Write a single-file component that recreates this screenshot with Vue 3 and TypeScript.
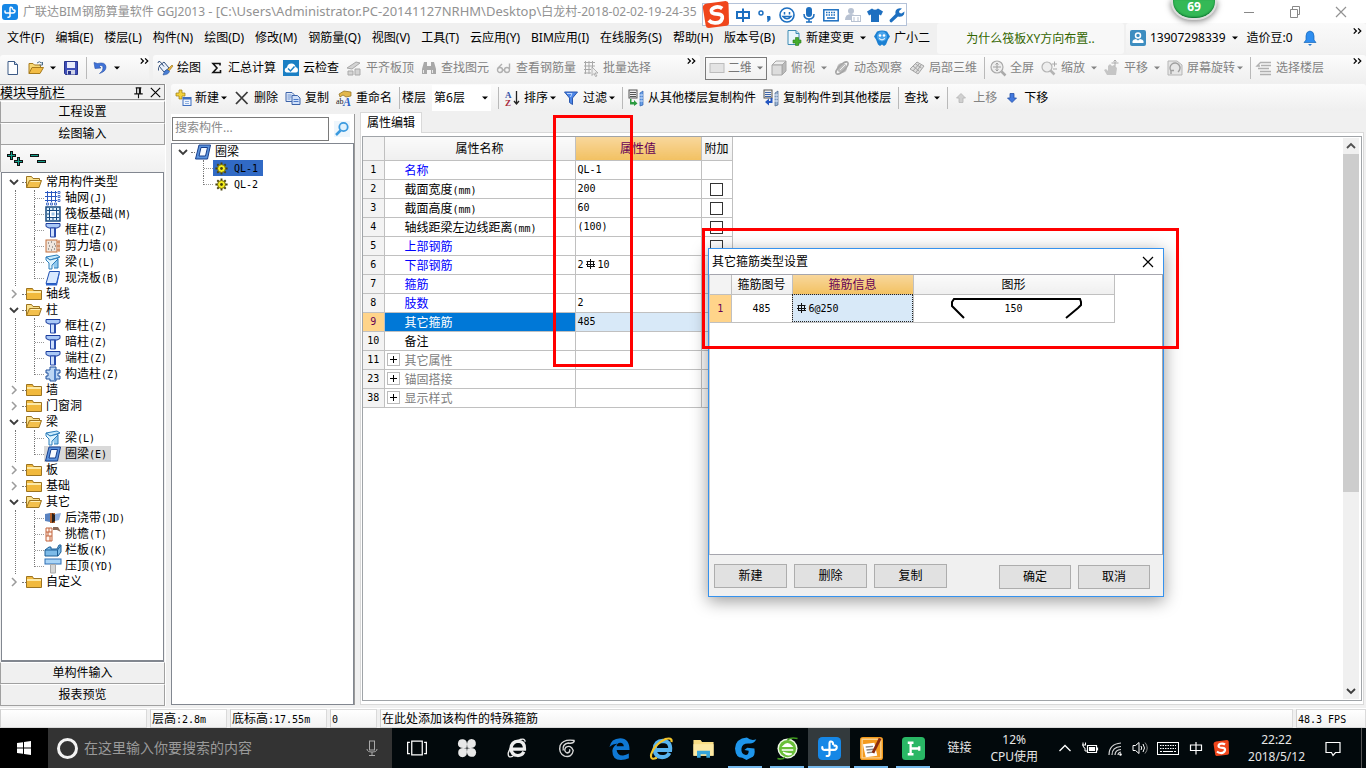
<script setup lang="ts">
import { h, ref, type FunctionalComponent } from 'vue'

interface Tool { i?: string; t?: string; arrow?: 'near' | 'far'; off?: boolean; sep?: boolean }
interface Row { n: number; t: string; v?: string; kind?: 'key' | 'group'; box?: boolean }
interface Group { t: string; open?: boolean; kids?: { i: string; t: string; on?: boolean }[] }

const glodon = '<rect width="16" height="16" rx="3" fill="#1687e6"/><path d="M10.500 5Q10.500 2.800 8.500 3.200 8 3.500 8 4.500v7.500q0 1.300-2 1.200M3 7q-.3 2.200 2 2h6q2.300-.2 2-2.300-.3-1-1.500-.7" fill="none" stroke="#fff" stroke-width="1.500" stroke-linecap="round"/>'
const art: Record<string, string> = {
  glodon,
  doc: '<path d="M3 1.500h6.500l3 3v10h-9.500z" fill="#fdfeff" stroke="#3c5a86"/><path d="M9.500 1.500v3h3" fill="#c9d8ee" stroke="#3c5a86"/>',
  open: '<path d="M1 13.500v-10h4l1.500 1.500h6v3" fill="#f7d774" stroke="#a87b1c"/><path d="M1 13.500l3-6h11.500l-3.500 6z" fill="#f2bc45" stroke="#a87b1c"/><path d="M9 3q2.500-2.500 4.500 0l1-1v3h-3" fill="none" stroke="#4e6e8a"/>',
  save: '<path d="M1.500 1.500h13v13h-12l-1-1z" fill="#3f4fb8" stroke="#27338b"/><rect x="4" y="2" width="8" height="6" fill="#e9ecfb"/><rect x="4" y="10" width="8" height="4.500" fill="#cfd4e8"/><rect x="5" y="11" width="3" height="3.500" fill="#27338b"/>',
  undo: '<path d="M2 2.500l1 6 6-.5-2-2q4-1.500 4 2 0 3-3.500 5.500 6.500-2 6.500-6.500-.5-5.500-8.500-3.500z" fill="#3f72d8" stroke="#2750a8" stroke-width=".6"/>',
  paint: '<path d="M2 6l5-4 5 6-5 4z" fill="#e9f0fb" stroke="#33507c"/><path d="M1 3q0-2 2-1.500l4 5" fill="none" stroke="#33507c"/><path d="M2 6q-2 4 0 5z" fill="#33507c"/><path d="M15 5l1 1-4 5-2-1z" fill="#e8b33a" stroke="#946d15" stroke-width=".6"/><path d="M6 15q2-6 5-5l1.500 1.500q-1 3-6.500 3.500z" fill="#4a7fd4" stroke="#28549c" stroke-width=".6"/>',
  sigma: '<path d="M12 5.500V3.500H5l4 4.500-4 4.500h7.500v-2.500" fill="none" stroke="#111" stroke-width="1.600"/>',
  cloud: '<rect width="16" height="16" fill="#1a7fc4"/><path d="M3.500 12.500q-2.500-1-1.500-3.500.5-1.500 2-1.500.5-4 4.500-4 3.500 0 4 3.500 2.500.5 2.500 3 0 2.500-2 2.500z" fill="#fff"/><path d="M5 8.500l2.500 2.500 4-4.500" fill="none" stroke="#1a7fc4" stroke-width="1.500"/>',
  align: '<g fill="#d4d4d4" stroke="#a9a9a9"><path d="M1 8l9-6 4 1-8 6z"/><path d="M2 11h5v4H2zM9 9h5v6H9z"/></g>',
  bino: '<g fill="#a8a8a8"><path d="M3 2h3v4h4V2h3l2 7v5h-5v-4H6v4H1V9z"/></g><path d="M2.500 10v3M11.500 10v3" stroke="#e8e8e8"/>',
  glass: '<g fill="none" stroke="#b0b0b0" stroke-width="1.400"><circle cx="4" cy="10" r="2.500"/><circle cx="11" cy="10" r="2.500"/><path d="M6.500 10h2M2 8L6 4M13.500 9V3.500"/></g>',
  batch: '<path d="M1 2.500h11M1 6h11M1 9.500h7M1 13h7M2.500 1v13M6 1v13M9.500 1v7" stroke="#a9a9a9" fill="none"/><path d="M9 7l6 6h-3l2 3-1.500.5-1.500-3-2 2z" fill="#eee" stroke="#999" stroke-width=".7"/>',
  view2: '<rect x="1" y="3.500" width="14" height="9" fill="#e3e3e3" stroke="#bcbcbc"/>',
  cube: '<path d="M1 5l4-4h10l-4 4z" fill="#eee" stroke="#a8a8a8"/><path d="M11 5l4-4v10l-4 4z" fill="#bbb" stroke="#a8a8a8"/><path d="M1 5h10v10H1z" fill="#ddd" stroke="#a8a8a8"/>',
  orbit: '<circle cx="8" cy="8" r="5" fill="#bcbcbc"/><ellipse cx="8" cy="8" rx="8" ry="3" transform="rotate(-45 8 8)" fill="none" stroke="#a5a5a5" stroke-width="1.500"/><path d="M6 10l5-5" stroke="#f0f0f0"/>',
  local: '<path d="M1 9l7-7 7 4-6 8z" fill="#dedede" stroke="#a4a4a4"/><path d="M4 6l6 5M6.500 4l6 4M4 11l6-7M7 12.500l5-7.500" stroke="#a4a4a4" fill="none"/>',
  full: '<circle cx="7" cy="7" r="6" fill="#eee" stroke="#aaa" stroke-width="1.200"/><path d="M11.500 11.500l4 4" stroke="#aaa" stroke-width="2.500"/><path d="M3 7h8M7 3v8M5.500 4.500L7 3l1.500 1.500M5.500 9.500L7 11l1.500-1.500" stroke="#a0a0a0" fill="none"/>',
  zoom: '<circle cx="6" cy="7" r="5" fill="#eee" stroke="#b4b4b4" stroke-width="1.200"/><path d="M9.500 10.500l4 4" stroke="#b4b4b4" stroke-width="2.500"/><path d="M11 4h5M13.500 1.500v5M12 9h4" stroke="#aaa"/>',
  pan: '<path d="M3 15l-3-5 2-1 2 2V6l2-2 2 2 2-1 3 3-1 7z" fill="#c5c5c5"/><path d="M7.500 3h7M11 0v6.500" stroke="#aaa"/><path d="M9.500 1.500L11 0l1.500 1.500" fill="none" stroke="#aaa"/>',
  rot: '<path d="M1 1h9l5 4v10H1z" fill="#e6e6e6" stroke="#b5b5b5"/><path d="M4 11a5 5 0 1 1 7 1M4 14v-3.500h3" fill="none" stroke="#a0a0a0" stroke-width="1.400"/>',
  floors: '<path d="M5 2.500h10M5 5.500h10M2 8.500h11M4 11.500h11M4 14.500h11M5 2L1 6h3" fill="none" stroke="#b0b0b0" stroke-width="1.400"/>',
  add: '<path d="M4 0h3v3h3v3H7v3H4V6H1V3h3z" fill="#f3d23c" stroke="#9c7d10" stroke-width=".7"/><rect x="8" y="7.500" width="8" height="8" fill="#eef4fd" stroke="#3f6fc0"/><path d="M8 8.500h8" stroke="#3f6fc0" stroke-width="2"/><path d="M10 11.500h4M10 13.500h4" stroke="#8fb0e0"/>',
  del: '<path d="M2 2l11.500 12M13.500 2L2 14" stroke="#3a3a3a" stroke-width="1.800" fill="none"/>',
  copy: '<path d="M1 2.500h6l2 2v7H1z" fill="#dfe9fa" stroke="#3c63a8"/><path d="M2.500 5h4M2.500 7h4M2.500 9h3" stroke="#6d92cf"/><path d="M7 5.500h5.500L15 8v6.500H7z" fill="#cfe0fa" stroke="#3c63a8"/><path d="M8.500 9.500h5M8.500 11.500h5" stroke="#4c79c6"/>',
  rename: '<path d="M3 4l5-3 7 1v4l-5 1-3-2-3 2z" fill="#e2b74c" stroke="#8a681a" stroke-width=".7"/><text x="0" y="14" font-size="8" font-family="Liberation Serif" fill="#222">ab</text><text x="7" y="16" font-size="12" font-style="italic" font-weight="bold" font-family="Liberation Serif" fill="#2a5fc4">A</text>',
  sort: '<text x="1" y="8" font-size="9" font-weight="bold" font-family="Liberation Serif" fill="#3353a8">A</text><text x="1" y="16" font-size="9" font-weight="bold" font-family="Liberation Serif" fill="#a82a3c">Z</text><path d="M12.500 1v12M10 11l2.500 3 2.500-3" fill="none" stroke="#222" stroke-width="1.300"/>',
  funnel: '<path d="M1.500 2h13L9.500 8v6.500l-3-2V8z" fill="#4c86e8" stroke="#2a57ae"/><path d="M4 3.500h5L7.500 7" fill="none" stroke="#bcd6ff"/>',
  from: '<rect x="1" y="0" width="8" height="8" fill="#eee" stroke="#555"/><path d="M2 2.500h6M2 4.500h6M2 6.500h6" stroke="#555"/><path d="M12 3l3-2v14l-3 1z" fill="#6aa0e8" stroke="#2e62b0" stroke-width=".7"/><path d="M11 5h4M11 8h4M11 11h4" stroke="#d8e8ff"/><path d="M3.500 9v3H6v-2l3.500 3.500L6 16v-1.500H2V9z" fill="#2c9b41"/>',
  to: '<rect x="1" y="0" width="8" height="8" fill="#eee" stroke="#555"/><path d="M2 2.500h6M2 4.500h6M2 6.500h6" stroke="#3c63a8"/><path d="M12 3l3-2v14l-3 1z" fill="#9ab4d4" stroke="#46618a" stroke-width=".7"/><path d="M11 5h4M11 8h4M11 11h4" stroke="#e8f0ff"/><path d="M9.500 8v5H6v2.500L2 12l4-3.500V11h1.500V8z" fill="#2456c0"/>',
  up: '<path d="M8 3.500l4.500 4.500H10v4.500H6V8H3.500z" fill="#d0d0d0" stroke="#b5b5b5" stroke-width=".8"/>',
  down: '<path d="M8 12.500L3.500 8H6V3.500h4V8h2.500z" fill="#4278dd" stroke="#2450a8" stroke-width=".8"/>',
  change: '<path d="M2 .5h8l3 3v11H2z" fill="#eaf6fc" stroke="#3f8cb4"/><path d="M10 .5v3h3" fill="#bfe0f2" stroke="#3f8cb4"/><path d="M9.500 7.500h3v2.500H15v3h-2.500V15.500h-3V13H7v-3h2.500z" fill="#43ad2c" stroke="#2c7a1a" stroke-width=".6"/>',
  mascot: '<path d="M3 1.500Q8-.5 13 1.500l3 5-2 3-2 5-2 1.500-2-1.500-2 1.500-2-1.500-2-5-2-3z" fill="#1c80d2"/><circle cx="8" cy="6.500" r="5" fill="#49a5ec"/><circle cx="6" cy="5.500" r="1.300" fill="#fff"/><circle cx="10" cy="5.500" r="1.300" fill="#fff"/><path d="M5 8.500q3 3 6 0" stroke="#fff" fill="none"/>',
  user: '<rect width="16" height="16" rx="2" fill="#3d8dc0"/><circle cx="8" cy="5.500" r="2.500" fill="#3d8dc0" stroke="#fff" stroke-width="1.500"/><path d="M2.500 13V11q.5-1.500 3.500-2l2 1.500L10 9q3 .5 3.500 2v2z" fill="#fff"/>',
  bell: '<path d="M8 1q4 .5 4 5v4l2 2.500H2L4 10V6q0-4.500 4-5z" fill="#2f8ef0" stroke="#1665b8" stroke-width=".7"/><path d="M6 14h4l-2 2z" fill="#2b7cd0"/>',
  folder: '<path d="M.5 13.500v-11h6l1 2h8v9z" fill="#f1b93d" stroke="#9c7420"/><path d="M1 6h14" stroke="#fdeaa8" stroke-width="2"/>',
  folderOpen: '<path d="M.5 13.500v-11h5l1.500 2h6.500v3" fill="#fbe28e" stroke="#9c7420"/><path d="M.5 13.500l3-7h12l-2.500 7z" fill="#f3c04d" stroke="#9c7420"/><path d="M4.500 7.500h9.500" stroke="#fff0b8"/>',
  axis: '<path d="M2.500 1v11M6.500 1v11M10.500 1v11M0 2.500h12M0 6.500h12M0 10.500h12" stroke="#2a58c0"/><path d="M13 1.500h2v2h-2zM13 5.500h2v2h-2zM13 9.500h2v2h-2zM1.500 13h2v2h-2zM5.500 13h2v2h-2zM9.500 13h2v2h-2z" fill="#fff" stroke="#2a58c0" stroke-width=".8"/>',
  raft: '<rect x="1" y="1" width="14" height="14" fill="#dff0fb" stroke="#174a80" stroke-width="1.500"/><rect x="4.500" y="4.500" width="7" height="7" fill="#fff" stroke="#174a80"/><rect x="6.500" y="6.500" width="3" height="3" fill="#9cc4e4"/><path d="M4.500 2v2M8 2v2M11.500 2v2M4.500 12v2M8 12v2M11.500 12v2M2 4.500h2M2 8h2M2 11.500h2M12 4.500h2M12 8h2M12 11.500h2" stroke="#174a80"/>',
  column: '<path d="M1 1.500h14v3l-3 1.500H4L1 4.500z" fill="#a9c8f7" stroke="#1b3c9c"/><path d="M5.500 6h5v9h-5z" fill="#cfe0fc" stroke="#2a4dac"/><path d="M9.500 6v9" stroke="#2a4dac"/>',
  wall: '<rect x="1" y="2" width="11" height="12" fill="#efe6de" stroke="#c4713c"/><path d="M3 5h1M6 4h1M9 6h1M4 8h1M7 9h1M3 11h1M6 12h1M9 11h1M10 8h1" stroke="#555"/><path d="M14 2v12M12 4h3M12 8h3M12 12h3" stroke="#c4713c"/>',
  beam: '<path d="M1 3l11-2 3 2-10 3z" fill="#c8eafc" stroke="#2b7cba"/><path d="M5 6l8-2-1 3-5 4v4H4V9L1 6V3z" fill="#e0f4fe" stroke="#2b7cba"/><path d="M8 10l5-5v9H9" fill="#8fc8ee" stroke="#2b7cba"/>',
  slab: '<path d="M4.500 1.500h10l-3 12H1z" fill="#d8e9ff" stroke="#2050b0"/><path d="M1 13.500h10.500l3-12v3l-2.500 11H1z" fill="#2b62cc"/>',
  ring: '<path d="M4 1h11.500L12.500 15H.5z" fill="#5b93dd" stroke="#173e8c"/><path d="M6 3.500h6.500l-2 8.500H4z" fill="#f7fbff" stroke="#173e8c"/>',
  gz: '<path d="M5 1h6v3h4v3h-2v3h2v3h-4v2H5v-2H1v-3h2V7H1V4h4z" fill="#bcd6f4" stroke="#20509c"/><path d="M10 3v11" stroke="#4d7fc6" stroke-width="2"/>',
  strip: '<path d="M0 4l5-1v9l-5-1z" fill="#5a83c0"/><path d="M5 3h5v10H5z" fill="#b2602c"/><path d="M7 3l3 2v6l-3 2z" fill="#28201c"/><path d="M10 4l6-1-2 7-4 1z" fill="#8eaede"/>',
  eave: '<path d="M1 2h6v13H1zM1 6h6M1 10h6M4 2v4M3 6v4M5 10v5" fill="#fff3ec" stroke="#c2633a"/><path d="M8 1h5l3 5-4-2H8z" fill="#8a6a58"/>',
  rail: '<path d="M0 8l4-3h2v2h6l2-4h2v7l-3 4H0z" fill="#7dbbe8" stroke="#1e5f96"/><path d="M0 8h12.500l3-4M12.500 8v6" fill="none" stroke="#1e5f96"/>',
  cap: '<rect x="0" y="1" width="16" height="5" fill="#a9d4f6" stroke="#2f6fb4"/><path d="M5.500 6.500h5V15h-5z" fill="#d6d6d6" stroke="#aaa"/>',
  gear: '<path d="M8 1.500v13M1.500 8h13M3.500 3.500l9 9M12.500 3.500l-9 9" stroke="#4a4410" stroke-width="2"/><circle cx="8" cy="8" r="4.200" fill="#f5ee1e" stroke="#5a5010" stroke-width=".8"/><circle cx="8" cy="8" r="1.500" fill="#4a4410"/>',
  find: '<rect width="16" height="16" fill="#eef6fc"/><circle cx="9.500" cy="6" r="4.200" fill="#dff1fd" stroke="#3b9adf" stroke-width="1.800"/><path d="M6.500 9.500L2 14" stroke="#3b9adf" stroke-width="2.500"/>',
  expand: '<path d="M4.500 0v9M0 4.500h9M11.500 6v9M7 10.500h9" stroke="#111" stroke-width="3"/><path d="M4.500 1v7M1 4.500h7M11.500 7v7M8 10.500h7" stroke="#14a08c"/>',
  collapse: '<path d="M0 4.500h9M7 10.500h9" stroke="#111" stroke-width="3"/><path d="M1 4.500h7M8 10.500h7" stroke="#14a08c"/>',
  pin: '<path d="M5 3h6M6 3v6M10 3v6M9 3v6M3.500 9.500h9M8 9v5" stroke="#111" fill="none" stroke-width="1.200"/>',
  close: '<path d="M3 3l10 10M13 3L3 13" stroke="currentColor" fill="none" stroke-width="1.200"/>',
  restore: '<path d="M3.500 5.500h7v8h-7zM5.500 5.500v-3h7v8h-2" fill="none" stroke="#888"/>',
  min: '<path d="M3 8.500h10" stroke="#888"/>',
  chevD: '<path d="M4 6l4 4 4-4" fill="none" stroke="#3c3c3c" stroke-width="1.800"/>',
  chevR: '<path d="M6 4l4 4-4 4" fill="none" stroke="#9b9b9b" stroke-width="1.500"/>',
  chevU: '<path d="M4 10l4-4 4 4" fill="none" stroke="#505050" stroke-width="1.800"/>',
  more: '<path d="M2 5l3 3-3 3M7 5l3 3-3 3" fill="none" stroke="#000" stroke-width="1.500"/>',
  arrow: '<path d="M4 6h8l-4 4z" fill="currentColor"/>',
  zhong: '<path d="M2 5h12v6H2zM8 1.500v13.500" fill="none" stroke="#1d6fc0" stroke-width="2"/>',
  punct: '<circle cx="4" cy="6" r="2" fill="none" stroke="#1d6fc0" stroke-width="1.500"/><path d="M10 9.500h3v3l-2.500 2.500" fill="#1d6fc0" stroke="#1d6fc0"/>',
  smile: '<circle cx="8" cy="8" r="7" fill="none" stroke="#1d6fc0" stroke-width="1.600"/><path d="M5.500 5v2.500M10.500 5v2.500M4 9.500q4 4.500 8 0z" stroke="#1d6fc0" stroke-width="1.500" fill="none"/>',
  mic: '<rect x="5" y="0" width="6" height="10" rx="3" fill="#1d6fc0"/><path d="M3 7q0 5 5 5t5-5M8 12v3M5 15h6" fill="none" stroke="#1d6fc0" stroke-width="1.500"/>',
  keys: '<rect x=".8" y="2.800" width="14.400" height="11" fill="none" stroke="#1d6fc0" stroke-width="1.500"/><path d="M3 5.500h10M3 8h10" stroke="#1d6fc0" stroke-width="1.500" stroke-dasharray="1.500 1"/><path d="M4 11h8" stroke="#1d6fc0" stroke-width="1.500"/>',
  person: '<circle cx="6" cy="4" r="3" fill="#b8c2d2"/><path d="M0 13q0-6 6-6 3 0 4 2v4z" fill="#b8c2d2"/><rect x="6.500" y="8.500" width="9" height="6" fill="#fff" stroke="#b8c2d2"/><path d="M8 11h2M12 11h2M8 13h2M12 13h2" stroke="#b8c2d2"/>',
  shirt: '<path d="M5 1.500q3 2.500 6 0l5 3-2 4-2-1V15H4V7.500l-2 1-2-4z" fill="#1d6fc0"/>',
  wrench: '<path d="M1 15l1.500.5L9 9.500q4 1 6-2l.5-3-3 2-2-.5-.5-2 3-2.500q-4-1-6 1.500-1 2-.5 4L.5 13z" fill="#1d6fc0"/>',
  win: '<path d="M1 3l6-.8v5.300H1zM8 2l7-1v6.500H8zM1 8.500h6v5.300L1 13zM8 8.500h7V15l-7-1z" fill="#fff"/>',
  micLine: '<rect x="5.500" y="1" width="5" height="9" fill="none" stroke="#aaa"/><path d="M3 9q0 3 5 3t5-3M8 12v3.500M5 15.500h6" fill="none" stroke="#aaa"/>',
  task: '<path d="M3.800 2.500h8.400v11H3.800zM2.300 3.500H.5v9h1.800M13.700 3.500h1.800v9h-1.800" fill="none" stroke="#fff"/>',
  swirl: '<g fill="#e8e8e8"><path d="M7.700 7.700Q1 9 .7 4.500 1 .5 5 1q4 .5 2.700 6.700z"/><path d="M8.300 7.700Q7 1 11.500.7 15.500 1 15 5q-.5 4-6.700 2.700z"/><path d="M8.300 8.300Q15 7 15.300 11.500 15 15.500 11 15q-4-.5-2.700-6.700z"/><path d="M7.700 8.300Q9 15 4.500 15.300.5 15 1 11q.5-4 6.700-2.700z"/></g>',
  eWhite: '<path d="M4 8.800h10q.3-5.800-5-6.300Q3.500 3 3.200 8.300 3.500 13.800 8.500 14q3.500 0 5-3" fill="none" stroke="#eee" stroke-width="2.600"/><path d="M14.500 3q0-3-4-1.800Q3 5 1 12q-.5 4.500 4 2.500" fill="none" stroke="#eee" stroke-width="1.100"/>',
  gLine: '<path d="M14 2q-9-1.500-11.500 4Q1 12 6 14.500q6 1.500 7-4.500-2-5-6-2.500-2 3 1 4.500 3-.5 2-3M14 2q-1 3-5 2-5 1-4 6" fill="none" stroke="#d8d8d8" stroke-width="1.100"/>',
  edge: '<path d="M1 7Q2 1 8.500.8 15 1 15 9H6q.5 4 4.500 3.800 2-.2 4-1.300v3.300Q12 16 9 16 3 16 3 9.500q.5-3.500 4-5Q3 4.800 1 7zM6 6.500h5q-.2-2.500-2.500-2.500T6 6.500z" fill="#0f78d4"/>',
  ie: '<path d="M4 9h10q.5-6-5-6.300Q3.500 3 3.200 8.500 3.500 14 8.500 14q3.500 0 5-3" fill="none" stroke="#58b4f0" stroke-width="2.800"/><path d="M15 3.500q.5-3.500-4.500-2Q3 5 .8 12q-.8 4.500 4 2.500" fill="none" stroke="#f2c42c" stroke-width="1.500"/>',
  files: '<path d="M1 2h5l1 1.500h8V13H1z" fill="#f9dd84"/><path d="M1 5h14v8H1z" fill="#fde9a4"/><path d="M3.500 14.500V9.500h9v5H10v-2.500H6v2.500z" fill="#37a5dc"/>',
  gBlue: '<path d="M15.500 1.500Q12 3 9 .3 1 1 .7 8q.5 6.500 5 6.500l3 1.500 3-1.500q3.500-1 2.500-6.500l-5-.5-2 1.500 3 .5q0 3-2 3-3.500-.5-3-4.500Q5.500 4 11 4.500q3 0 4.500-3z" fill="#1e96ec"/>',
  eGreen: '<circle cx="8" cy="8" r="7" fill="#eef8e6"/><circle cx="8" cy="8" r="6" fill="#6abf3a"/><path d="M4 9h8M5 6.500Q8 3 11 6.500zM5 10.500q3 3 6 1" fill="#fff" stroke="#fff"/><path d="M15 1q-5-1-7 1M1 15q4 1 5-1" stroke="#3f9a1e" fill="none"/>',
  note: '<rect width="16" height="16" rx="2" fill="#f39a1c"/><path d="M1.500 1.500h13v13h-13z" fill="none" stroke="#fbd08a"/><path d="M2 5l8-1 2 9-8 1z" fill="#fff"/><path d="M4 7l5-.5M4.500 9l5-.5M5 11l4-.5" stroke="#888"/><path d="M14 1L9 11" stroke="#8b2b0c" stroke-width="2"/>',
  greenT: '<rect width="16" height="16" rx="2.500" fill="#29b765"/><path d="M4 4h4M6 4v8M4 12h4M6 8h6.500M12 6.500v3" fill="none" stroke="#fff" stroke-width="1.600"/>',
  caret: '<path d="M2.500 11L8 5.500l5.500 5.500" fill="none" stroke="#fff" stroke-width="1.300"/>',
  batt: '<path d="M5.500 5.500h9v7h-9zM15.500 7.500v3" fill="none" stroke="#fff" stroke-width="1.200"/><path d="M7 7h6v4H7z" fill="#fff"/><path d="M0 5h4M1 2.500V5M3.500 2.500V5M1 5q0 3 2 3v3h2" fill="none" stroke="#fff"/>',
  wifi: '<path d="M2 15Q2 4 14 3M5 15Q5 7 14 6.500M8 15q0-5 6-5.500M11 15q0-2.500 3-3" fill="none" stroke="#d8d8d8" stroke-width="1.200"/><circle cx="13.500" cy="14.500" r="1.200" fill="#fff"/>',
  vol: '<path d="M1 5.500h2.500L7 2.500v11l-3.500-3H1z" fill="none" stroke="#fff"/><path d="M9 6q1.500 2 0 4M11 4q3 4 0 8" fill="none" stroke="#fff"/><path d="M13 2.500q4.500 5.500 0 11" fill="none" stroke="#888"/>',
  kbd: '<rect x=".5" y="2.500" width="21" height="12" fill="none" stroke="#fff"/><path d="M3 5.500h16M3 8.500h16" stroke="#fff" stroke-dasharray="1.500 1"/><path d="M3 11.500h2M6 11.500h10M17 11.500h2" stroke="#fff"/>',
  zhongW: '<path d="M2.500 5h11v5.500h-11zM8 2v12.500" fill="none" stroke="#fff" stroke-width="1.200"/>',
  sogou: '<path d="M3 1.500L14 0q1.500 0 1.700 1.500L16 13q0 1.500-1.500 1.700L4 16q-1.500 0-1.800-1.500L.5 4Q.3 2 3 1.500z" fill="#f0461c"/><path d="M12 4.500Q10 3 7.500 3.800 4.500 5 6 7q1 .8 3.500.8 3 .2 2.500 2.500-1 3-4.500 2.700-2 0-3.500-1.500" fill="none" stroke="#fff" stroke-width="2.200"/>',
  notify: '<path d="M1 2.500h14v10h-4.500L8 15.500 6.500 12.500H1z" fill="none" stroke="#fff" stroke-width="1.200"/>',
}

const Ic: FunctionalComponent<{ n: string; w?: number }> = (p) =>
  h('svg', { class: 'ic', viewBox: `0 0 ${p.w ?? 16} 16`, 'aria-hidden': 'true', innerHTML: art[p.n] })
Ic.props = ['n', 'w']

// Chinese at full width, Latin and digits at half width, '#' stands for the rebar grade mark.
const Song: FunctionalComponent<{ t: string }> = (p) =>
  h('span', { class: 'song' }, (p.t.match(/#|[\x20-\x22\x24-\x7e]+|[^\x20-\x7e]+/g) ?? []).map((s) =>
    s === '#'
      ? h('svg', { class: 'grade', viewBox: '0 0 12 10', innerHTML: '<path d="M5.500 0v10M1.500 2.500h8M2.500 2.500v5M8.500 2.500v5M1 5.500h9M2 7.500h8" fill="none" stroke="#111"/>' })
      : /^[\x20-\x7e]/.test(s) ? h('span', { class: 'half' }, s) : s))
Song.props = ['t']

const Tools: FunctionalComponent<{ items: Tool[] }> = (p) =>
  p.items.map((t) => t.sep
    ? h('span', { class: 'sep' })
    : h('button', { type: 'button', class: ['tool', { off: t.off }] }, [
        t.i ? h(Ic, { n: t.i }) : null,
        t.t ? h('span', t.t) : null,
        t.arrow ? h(Ic, { n: 'arrow', class: ['drop', t.arrow] }) : null,
      ]))
Tools.props = ['items']

const menus = ['文件(F)', '编辑(E)', '楼层(L)', '构件(N)', '绘图(D)', '修改(M)', '钢筋量(Q)', '视图(V)', '工具(T)', '云应用(Y)', 'BIM应用(I)', '在线服务(S)', '帮助(H)', '版本号(B)']
const imeIcons = ['zhong', 'punct', 'smile', 'mic', 'keys', 'person', 'shirt', 'wrench']

const fileTools: Tool[] = [{ i: 'doc' }, { i: 'open', arrow: 'far' }, { i: 'save' }, { sep: true }, { i: 'undo', arrow: 'far' }]
const drawTools: Tool[] = [
  { i: 'paint', t: '绘图' }, { i: 'sigma', t: '汇总计算' }, { i: 'cloud', t: '云检查' },
  { i: 'align', t: '平齐板顶', off: true }, { i: 'bino', t: '查找图元', off: true },
  { i: 'glass', t: '查看钢筋量', off: true }, { i: 'batch', t: '批量选择', off: true },
]
const viewTools: Tool[] = [
  { i: 'cube', t: '俯视', arrow: 'far', off: true }, { i: 'orbit', t: '动态观察', off: true }, { i: 'local', t: '局部三维', off: true },
  { sep: true }, { i: 'full', t: '全屏', off: true }, { i: 'zoom', t: '缩放', arrow: 'far', off: true },
  { i: 'pan', t: '平移', arrow: 'far', off: true }, { i: 'rot', t: '屏幕旋转', arrow: 'near', off: true },
  { sep: true }, { i: 'floors', t: '选择楼层', off: true },
]
const editTools: Tool[] = [{ i: 'add', t: '新建', arrow: 'near' }, { i: 'del', t: '删除' }, { i: 'copy', t: '复制' }, { i: 'rename', t: '重命名' }]
const floorTools: Tool[] = [
  { sep: true }, { i: 'sort', t: '排序', arrow: 'near' }, { i: 'funnel', t: '过滤', arrow: 'near' },
  { sep: true }, { i: 'from', t: '从其他楼层复制构件' }, { i: 'to', t: '复制构件到其他楼层' },
  { sep: true }, { t: '查找', arrow: 'far' }, { sep: true }, { i: 'up', t: '上移', off: true }, { i: 'down', t: '下移' },
]

const groups = ref<Group[]>([
  { t: '常用构件类型', open: true, kids: [
    { i: 'axis', t: '轴网(J)' }, { i: 'raft', t: '筏板基础(M)' }, { i: 'column', t: '框柱(Z)' },
    { i: 'wall', t: '剪力墙(Q)' }, { i: 'beam', t: '梁(L)' }, { i: 'slab', t: '现浇板(B)' }] },
  { t: '轴线' },
  { t: '柱', open: true, kids: [
    { i: 'column', t: '框柱(Z)' }, { i: 'column', t: '暗柱(Z)' }, { i: 'column', t: '端柱(Z)' }, { i: 'gz', t: '构造柱(Z)' }] },
  { t: '墙' }, { t: '门窗洞' },
  { t: '梁', open: true, kids: [{ i: 'beam', t: '梁(L)' }, { i: 'ring', t: '圈梁(E)', on: true }] },
  { t: '板' }, { t: '基础' },
  { t: '其它', open: true, kids: [
    { i: 'strip', t: '后浇带(JD)' }, { i: 'eave', t: '挑檐(T)' }, { i: 'rail', t: '栏板(K)' }, { i: 'cap', t: '压顶(YD)' }] },
  { t: '自定义' },
])

const rows: Row[] = [
  { n: 1, t: '名称', v: 'QL-1', kind: 'key' },
  { n: 2, t: '截面宽度(mm)', v: '200', box: true },
  { n: 3, t: '截面高度(mm)', v: '60', box: true },
  { n: 4, t: '轴线距梁左边线距离(mm)', v: '(100)', box: true },
  { n: 5, t: '上部钢筋', kind: 'key', box: true },
  { n: 6, t: '下部钢筋', v: '2#10', kind: 'key', box: true },
  { n: 7, t: '箍筋', kind: 'key', box: true },
  { n: 8, t: '肢数', v: '2', kind: 'key' },
  { n: 9, t: '其它箍筋', v: '485' },
  { n: 10, t: '备注', box: true },
  { n: 11, t: '其它属性', kind: 'group' },
  { n: 23, t: '锚固搭接', kind: 'group' },
  { n: 38, t: '显示样式', kind: 'group' },
]

const wideApps = ['task', 'swirl', 'eWhite', 'gLine']
const apps = [
  { i: 'edge' }, { i: 'ie' }, { i: 'files' }, { i: 'gBlue', run: true }, { i: 'eGreen', run: true },
  { i: 'glodon', run: true, on: true }, { i: 'note', run: true }, { i: 'greenT', run: true },
]
</script>

<template>
  <div class="screen">
    <header class="title">
      <Ic n="glodon" />
      <span class="path">广联达BIM钢筋算量软件 GGJ2013 <span class="dir">- [C:\Users\Administrator.PC-20141127NRHM\Desktop\</span>白龙村-2018-02-02-19-24-35</span>
      <button type="button" class="wbtn" aria-label="最小化"><Ic n="min" /></button>
      <button type="button" class="wbtn" aria-label="还原"><Ic n="restore" /></button>
      <button type="button" class="wbtn" aria-label="关闭"><Ic n="close" /></button>
    </header>
    <div class="ime"><Ic n="sogou" class="big" /><Ic v-for="i in imeIcons" :key="i" :n="i" /></div>
    <div class="bubble"><span>69</span></div>

    <nav class="menubar">
      <div class="menus">
        <button v-for="m in menus" :key="m" type="button">{{ m }}</button>
        <button type="button" class="tool"><Ic n="change" /><span>新建变更</span><Ic n="arrow" class="drop far" /></button>
        <button type="button" class="tool helper"><Ic n="mascot" /><span>广小二</span></button>
      </div>
      <a class="tip" href="#">为什么筏板XY方向布置..</a>
      <div class="account">
        <button type="button" class="tool"><Ic n="user" /><span class="phone">13907298339</span><Ic n="arrow" class="drop far" /></button>
        <span>造价豆:0</span>
        <Ic n="bell" />
        <Ic n="more" class="more" />
      </div>
    </nav>

    <div class="bars">
      <div class="bar bar-file"><Tools :items="fileTools" /><Ic n="more" class="more" /></div>
      <div class="bar bar-draw"><Tools :items="drawTools" /><Ic n="more" class="more" /></div>
      <div class="bar bar-view">
        <label class="combo mode"><Ic n="view2" /><select aria-label="视图模式"><option>二维</option></select><Ic n="arrow" class="drop" /></label>
        <Tools :items="viewTools" /><Ic n="more" class="more" />
      </div>
    </div>

    <div class="work">
      <aside class="nav">
        <div class="nav-head"><span>模块导航栏</span><Ic n="pin" /><Ic n="close" /></div>
        <button type="button" class="flat">工程设置</button>
        <button type="button" class="flat">绘图输入</button>
        <div class="nav-tools"><Ic n="expand" /><Ic n="collapse" /></div>
        <div class="tree">
          <template v-for="g in groups" :key="g.t">
            <button type="button" class="node" @click="g.open = !g.open">
              <Ic :n="g.open ? 'chevD' : 'chevR'" class="tw" /><i class="dash"></i><Ic :n="g.open ? 'folderOpen' : 'folder'" /><Song :t="g.t" />
            </button>
            <div v-if="g.open && g.kids" class="kids">
              <button v-for="k in g.kids" :key="k.t" type="button" class="kid">
                <i class="branch"></i><span class="leaf" :class="{ on: k.on }"><Ic :n="k.i" /><Song :t="k.t" /></span>
              </button>
            </div>
          </template>
        </div>
        <button type="button" class="flat">单构件输入</button>
        <button type="button" class="flat">报表预览</button>
      </aside>

      <div class="right">
        <div class="bar bar-edit">
          <Tools :items="editTools" />
          <label class="floor"><span>楼层</span><span class="combo floor-box"><select><option>第6层</option></select><Ic n="arrow" class="drop" /></span></label>
          <Tools :items="floorTools" />
        </div>
        <div class="panes">
          <section class="parts">
            <div class="search"><input type="text" placeholder="搜索构件..." aria-label="搜索构件"><button type="button" aria-label="搜索"><Ic n="find" /></button></div>
            <div class="list">
              <div class="node"><Ic n="chevD" class="tw" /><i class="dash"></i><Ic n="ring" /><Song t="圈梁" /></div>
              <div class="sub"><i class="branch"></i><button type="button" class="part on"><Ic n="gear" /><Song t="QL-1" /></button></div>
              <div class="sub last"><i class="branch"></i><button type="button" class="part"><Ic n="gear" /><Song t="QL-2" /></button></div>
            </div>
          </section>

          <section class="props">
            <button type="button" class="tab">属性编辑</button>
            <div class="page">
              <div class="sheet">
                <div class="grid-area">
                  <table class="grid">
                    <colgroup><col class="c1"><col class="c2"><col class="c3"><col class="c4"></colgroup>
                    <thead><tr><th></th><th>属性名称</th><th class="hot">属性值</th><th>附加</th></tr></thead>
                    <tbody>
                      <tr v-for="r in rows" :key="r.n" :class="[r.kind, { cur: r.n === 9 }]">
                        <th><Song :t="String(r.n)" /></th>
                        <td class="name"><button v-if="r.kind === 'group'" type="button" class="plus" aria-label="展开"></button><Song :t="r.t" /></td>
                        <td class="val"><Song v-if="r.v" :t="r.v" /></td>
                        <td class="chk"><input v-if="r.box" type="checkbox" :aria-label="r.t"></td>
                      </tr>
                    </tbody>
                  </table>
                </div>
                <div class="scroll"><Ic n="chevU" /><i class="thumb"></i><Ic n="chevD" /></div>
              </div>
            </div>
          </section>
        </div>
      </div>
    </div>

    <footer class="status">
      <span class="s1"></span><span class="s2"><Song t="层高:2.8m" /></span><span class="s3"><Song t="底标高:17.55m" /></span>
      <span class="s4"><Song t="0" /></span><span class="s5"><Song t="在此处添加该构件的特殊箍筋" /></span><span class="s6"><Song t="48.3 FPS" /></span>
    </footer>

    <div class="taskbar">
      <button type="button" class="start" aria-label="开始"><Ic n="win" /></button>
      <label class="cortana"><i class="ringmark"></i><input type="text" placeholder="在这里输入你要搜索的内容" aria-label="搜索"><Ic n="micLine" /></label>
      <button v-for="a in wideApps" :key="a" type="button" class="app wide" :aria-label="a"><Ic :n="a" /></button>
      <div class="apps">
        <button v-for="a in apps" :key="a.i" type="button" class="app" :class="{ run: a.run, on: a.on }" :aria-label="a.i"><Ic :n="a.i" /></button>
      </div>
      <div class="tray">
        <span class="links">链接</span>
        <span class="cpu">12%<br>CPU使用</span>
        <Ic n="caret" /><Ic n="batt" /><Ic n="wifi" /><Ic n="vol" /><Ic n="kbd" :w="22" class="kbd" /><Ic n="zhongW" /><Ic n="sogou" />
        <span class="clock">22:22<br>2018/5/12</span>
        <button type="button" class="note" aria-label="通知"><Ic n="notify" /></button>
      </div>
    </div>

    <div class="dialog" role="dialog" aria-label="其它箍筋类型设置">
      <div class="dlg-title"><span>其它箍筋类型设置</span><button type="button" aria-label="关闭"><Ic n="close" /></button></div>
      <div class="dlg-body">
        <table class="grid">
          <colgroup><col class="d1"><col class="d2"><col class="d3"><col class="d4"></colgroup>
          <thead><tr><th></th><th>箍筋图号</th><th class="hot">箍筋信息</th><th>图形</th></tr></thead>
          <tbody><tr class="cur">
            <th><Song t="1" /></th><td class="mid"><Song t="485" /></td>
            <td class="focus"><Song t="#6@250" /></td>
            <td class="mid shape">
              <svg viewBox="0 0 134 22"><path d="M15 20L3 8V4l2-3h126l1 3v3l-3 3-12 10" fill="none" stroke="#000" stroke-width="2" /></svg>
              <Song t="150" />
            </td>
          </tr></tbody>
        </table>
      </div>
      <div class="dlg-foot">
        <div class="left"><button type="button">新建</button><button type="button">删除</button><button type="button">复制</button></div>
        <div class="ok"><button type="button">确定</button><button type="button">取消</button></div>
      </div>
    </div>
    <div class="mark mark-col"></div>
    <div class="mark mark-dlg"></div>
  </div>
</template>

<style>
body { margin: 0; }
.ic { width: 16px; height: 16px; flex: none; display: block; overflow: visible; }
.song { white-space: pre; }
.song .half { font-family: "DejaVu Sans Mono", monospace; font-size: 10px; }
.song .grade { width: 12px; height: 10px; vertical-align: -1px; margin: 0 1px; }
.screen button { font: inherit; color: inherit; background: none; border: 0; padding: 0; margin: 0; text-align: left; white-space: nowrap; }
.screen .tool { display: flex; align-items: center; gap: 4px; flex: none; }
.tool.off { color: #838383; }
.drop { width: 12px; height: 12px; margin: 0 -3px; }
.tool .drop.near { margin-left: -5px; }
.tool .drop.far { margin-left: -1px; }
.sep { width: 1px; height: 22px; background: #b9b9b9; margin-right: -2px; flex: none; }
</style>

<style scoped>
.screen { position: relative; min-height: 100vh; display: flex; flex-direction: column; overflow: hidden; background: #f0f0f0; color: #000; font: 12px/16px "Noto Sans", "Noto Sans CJK SC", sans-serif; }
.title { height: 23px; background: #fff; display: flex; align-items: center; padding: 0 2px; color: #929292; }
.path { flex: 1; margin-left: 5px; white-space: nowrap; overflow: hidden; }
.dir { font-size: 13px; }
.screen .wbtn { width: 46px; display: flex; justify-content: center; }
.ime { position: absolute; left: 702px; top: 3px; width: 205px; height: 23px; box-sizing: border-box; border: 1px solid #b4c2d8; background: #fff; display: flex; align-items: center; gap: 6px; }
.ime .big { width: 27px; height: 27px; margin: 0 0 0 -1px; }
.bubble { position: absolute; left: 1171px; top: 0; width: 42px; height: 18px; border-radius: 0 0 21px 21px / 0 0 18px 18px; border: 2px solid #ddd; border-top: 0; background: #34b956; box-shadow: 0 1px 6px #777, inset 0 -1px 2px #0a6b2c; color: #fff; font: bold 12px/14px "Noto Sans", sans-serif; text-align: center; }

.menubar { display: flex; height: 31px; margin-bottom: 1px; }
.menus { display: flex; align-items: center; gap: 11px; padding: 0 0 1px 7px; width: 937px; box-sizing: border-box; }
.screen .menus .helper { margin-left: -3px; }
.tip { width: 187px; margin-right: 2px; background: #f8f8f8; color: #336600; text-decoration: none; display: flex; align-items: center; justify-content: center; border-radius: 3px; }
.account { flex: 1; display: flex; align-items: center; gap: 9px; padding: 0 0 1px 4px; background: linear-gradient(#fafafa, #f1f1f1); border-radius: 3px; }
.more { margin-left: auto; margin-top: -14px; width: 14px; height: 14px; }

.bars { display: flex; gap: 4px; height: 28px; margin-bottom: 1px; }
.bar { display: flex; align-items: center; gap: 7px; background: linear-gradient(#fcfcfc, #efefef); border-radius: 3px; }
.bars .bar { box-sizing: border-box; padding-bottom: 2px; }
.bar-file { width: 149px; padding-left: 5px; }
.bar-file .more { margin-right: -4px; }
.bar-draw { width: 547px; padding-left: 4px; }
.bar-view { flex: 1; padding: 0 0 0 1px; }
.combo { display: flex; align-items: center; }
.combo select { appearance: none; border: 0; background: none; font: inherit; color: inherit; padding: 0; margin: 0; flex: 1; min-width: 0; height: 18px; }
.mode { width: 62px; height: 23px; box-sizing: border-box; border: 1px solid #7a7a7a; color: #777; padding: 0 3px; gap: 3px; margin-right: -3px; }
.mode .drop { margin: 0; margin-right: -3px; }

.work { flex: 1; display: flex; gap: 5px; min-height: 0; }
.nav { width: 165px; display: flex; flex-direction: column; border-right: 1px solid #fff; margin-bottom: 2px; }
.nav-head { display: flex; align-items: center; gap: 2px; height: 14px; border: 1px solid #8e8e8e; border-left: 0; margin-bottom: 1px; padding-right: 1px; }
.nav-head span { flex: 1; font-size: 13px; }
.nav-head .ic { width: 15px; height: 15px; }
.screen .flat { height: 22px; border: 1px solid #a0a0a0; border-top-color: #fff; background: #f0f0f0; text-align: center; }
.nav-tools { height: 27px; display: flex; align-items: center; gap: 7px; padding-left: 6px; background: linear-gradient(#fafafa, #f0f0f0); border-left: 1px solid #aaa; }
.tree { flex: 1; border: 1px solid #828790; border-bottom-width: 2px; margin: 0 1px; background: #fff; padding: 1px 0 0 4px; }
.node { display: flex; align-items: center; height: 16px; }
.screen .tree .node { display: flex; width: 100%; }
.dash { width: 4px; border-top: 1px dotted #777; }
.node .ic + .song { margin-left: 4px; }
.kids { margin-left: 9px; border-left: 1px dotted #777; padding-left: 18px; }
.screen .kid { display: flex; height: 16px; width: 100%; align-items: center; }
.branch { width: 10px; height: 16px; border-left: 1px dotted #777; box-sizing: border-box; background: repeating-linear-gradient(90deg, #999 0 1px, #fff 1px 2px) 0 8px / 10px 1px no-repeat; }
.kid:last-child .branch, .last .branch { height: 9px; align-self: flex-start; }
.leaf { display: flex; align-items: center; gap: 4px; padding: 0 4px 0 1px; height: 16px; }
.leaf.on { background: #d9d9d9; }

.right { flex: 1; min-width: 0; display: flex; flex-direction: column; }
.bar-edit { height: 27px; padding-left: 4px; margin-bottom: 1px; }
.floor { display: flex; align-items: center; gap: 6px; border-left: 1px solid #b9b9b9; padding-left: 2px; height: 22px; }
.floor-box { width: 59px; height: 26px; background: #fff; padding: 0 2px; box-sizing: border-box; }
.floor-box .drop { margin: 0 -2px 0 0; }
.panes { flex: 1; display: flex; gap: 5px; min-height: 0; }
.parts { width: 184px; display: flex; flex-direction: column; background: #fff; margin: 2px 0 3px; border-right: 1px solid #9a9a9a; box-sizing: border-box; }
.search { display: flex; gap: 5px; padding: 3px 0 2px 1px; }
.search input { width: 157px; height: 24px; box-sizing: border-box; border: 1px solid #7a7a7a; background: #fff; padding: 0 2px 4px; font: inherit; }
.search input::placeholder { color: #8a8a8a; }
.list { flex: 1; border: 1px solid #828790; padding: 0 0 0 3px; }
.sub { display: flex; align-items: center; height: 16px; padding-left: 28px; }
.screen .part { display: flex; align-items: center; height: 16px; padding: 0 5px 0 1px; gap: 5px; }
.part .ic { width: 15px; height: 15px; }
.part.on { background: #316ac5; }

.props { flex: 1; min-width: 0; display: flex; flex-direction: column; align-items: stretch; margin: 0 2px 3px 0; }
.screen .tab { align-self: flex-start; height: 21px; width: 62px; border: 1px solid #d9d9d9; border-bottom: 0; background: #fff; text-align: center; margin-bottom: -1px; position: relative; }
.page { flex: 1; display: flex; border: 1px solid #d9d9d9; background: #fff; padding: 3px 1px; }
.sheet { flex: 1; display: flex; border: 1px solid #a0a4a8; padding-right: 2px; }
.grid-area { flex: 1; padding: 1px 0 0 1px; }
.scroll { width: 16px; background: #f0f0f0; display: flex; flex-direction: column; margin: 1px 0; }
.scroll .thumb { height: 338px; background: #cdcdcd; margin-bottom: auto; }
.grid { border-collapse: collapse; table-layout: fixed; width: 369px; margin-top: -1px; margin-left: -1px; }
.grid th, .grid td { border: 1px solid #c0c0c0; padding: 0; height: 18px; line-height: 16px; font-weight: normal; box-sizing: border-box; overflow: hidden; white-space: nowrap; }
.grid thead th { height: 23px; background: linear-gradient(#fbfbfb, #efefef); border-top: 0; padding-top: 2px; }
.grid tr > :first-child { border-left: 0; background: #f3f3f3; }
.grid tbody tr { height: 19px; }
.grid thead .hot { background: linear-gradient(#f8d79c, #f2c162); color: #660055; }
.c1 { width: 21px; } .c2 { width: 191px; } .c3 { width: 126px; } .c4 { width: 31px; }
.grid td.name { padding: 2px 0 0 20px; line-height: 15px; position: relative; }
.key .name { color: #00f; }
.group .name { color: #808080; }
.grid .val { padding-left: 2px; }
.chk { text-align: center; }
.chk input { appearance: none; display: block; width: 13px; height: 13px; margin: 1px auto 0; border: 1px solid #333; background: #fff; }
.grid .cur > th { background: #ffd48a; color: #660055; }
.cur .name { background: #0078d7; color: #fff; }
.cur .val { background: #d8e9f8; }
.screen .plus { position: absolute; left: 2px; top: 2px; width: 13px; height: 13px; border: 1px solid #bbb; background: linear-gradient(#000, #000) center / 7px 1px no-repeat, linear-gradient(#000, #000) center / 1px 7px no-repeat, #fff; }

.status { height: 20px; display: flex; gap: 3px; border-top: 1px solid #fff; box-sizing: border-box; line-height: 18px; }
.status span[class^="s"]:not(.song) { border: 1px solid #dadada; border-left-color: #d0d0d0; background: linear-gradient(#fff, #f2f2f2); padding-left: 1px; box-sizing: border-box; line-height: 17px; white-space: nowrap; }
.s1 { width: 147px; } .s2 { width: 77px; } .s3 { width: 97px; } .s4 { width: 47px; } .s5 { flex: 1; } .s6 { width: 70px; }

.taskbar { height: 40px; display: flex; background: #02090c; color: #e6e6e6; }
.screen .start { width: 48px; background: #000; display: flex; align-items: center; justify-content: center; }
.cortana { width: 344px; background: #333; display: flex; align-items: center; box-sizing: border-box; padding: 0 12px 0 9px; }
.ringmark { width: 15px; height: 15px; border: 3px solid #f2f2f2; border-radius: 50%; }
.cortana input { flex: 1; min-width: 0; background: none; border: 0; padding: 0 0 0 6px; font: inherit; font-size: 14px; line-height: 20px; color: #fff; }
.cortana input::placeholder { color: #9a9a9a; }
.screen .app { width: 42px; display: flex; align-items: center; justify-content: center; }
.screen .app.wide { width: 50px; }
.app .ic { width: 23px; height: 23px; }
.wide .ic { width: 20px; height: 20px; }
.apps { display: flex; margin-left: 6px; }
.screen .app.run { background: linear-gradient(#76b9ed, #76b9ed) bottom / 34px 2px no-repeat; }
.screen .app.on { background: linear-gradient(#76b9ed, #76b9ed) bottom / 42px 2px no-repeat, #333a3d; }
.tray { margin-left: auto; display: flex; align-items: center; gap: 9px; }
.cpu, .clock { text-align: center; line-height: 17px; }
.cpu { margin: 0 10px; }
.kbd { width: 22px; }
.clock { margin: 0 5px 0 10px; }
.screen .note { width: 43px; height: 40px; display: flex; align-items: center; justify-content: center; border-right: 1px solid #555; margin-right: 4px; padding-right: 14px; }

.dialog { position: absolute; left: 708px; top: 248px; width: 456px; height: 349px; box-sizing: border-box; border: 1px solid #3592ee; background: #f0f0f0; box-shadow: 0 4px 16px rgba(0, 0, 0, .4); display: flex; flex-direction: column; }
.dlg-title { height: 25px; background: #fff; display: flex; align-items: center; justify-content: space-between; padding: 0 7px 0 3px; }
.dlg-body { flex: 1; background: #fff; border: 1px solid #a6a6ae; border-left-color: #ccc; }
.dlg-body .grid { width: 404px; margin: 0; }
.dlg-body .grid thead th { height: 19px; }
.d1 { width: 21px; } .d2 { width: 61px; } .d3 { width: 121px; } .d4 { width: 201px; }
.dlg-body .grid tbody td, .dlg-body .grid tbody th { height: 28px; }
.mid { text-align: center; }
.grid .focus { background: #d8e9f8; outline: 1px dotted #222; outline-offset: -1px; padding-left: 2px; }
.shape { position: relative; }
.shape svg { position: absolute; left: 35px; top: 3px; width: 134px; height: 22px; }
.dlg-foot { height: 41px; box-sizing: border-box; display: flex; justify-content: space-between; padding: 1px 13px 0 5px; }
.dlg-foot > div { display: flex; gap: 7px; padding-top: 8px; }
.dlg-foot .ok { padding-top: 9px; }
.dlg-foot button { width: 73px; height: 24px; border: 1px solid #adadad; background: #e1e1e1; text-align: center; }
.dlg-foot .ok button { width: 72px; }
.mark { position: absolute; border: 3px solid #f00; box-sizing: border-box; pointer-events: none; }
.mark-col { left: 553px; top: 115px; width: 80px; height: 252px; }
.mark-dlg { left: 702px; top: 228px; width: 477px; height: 121px; }
</style>
